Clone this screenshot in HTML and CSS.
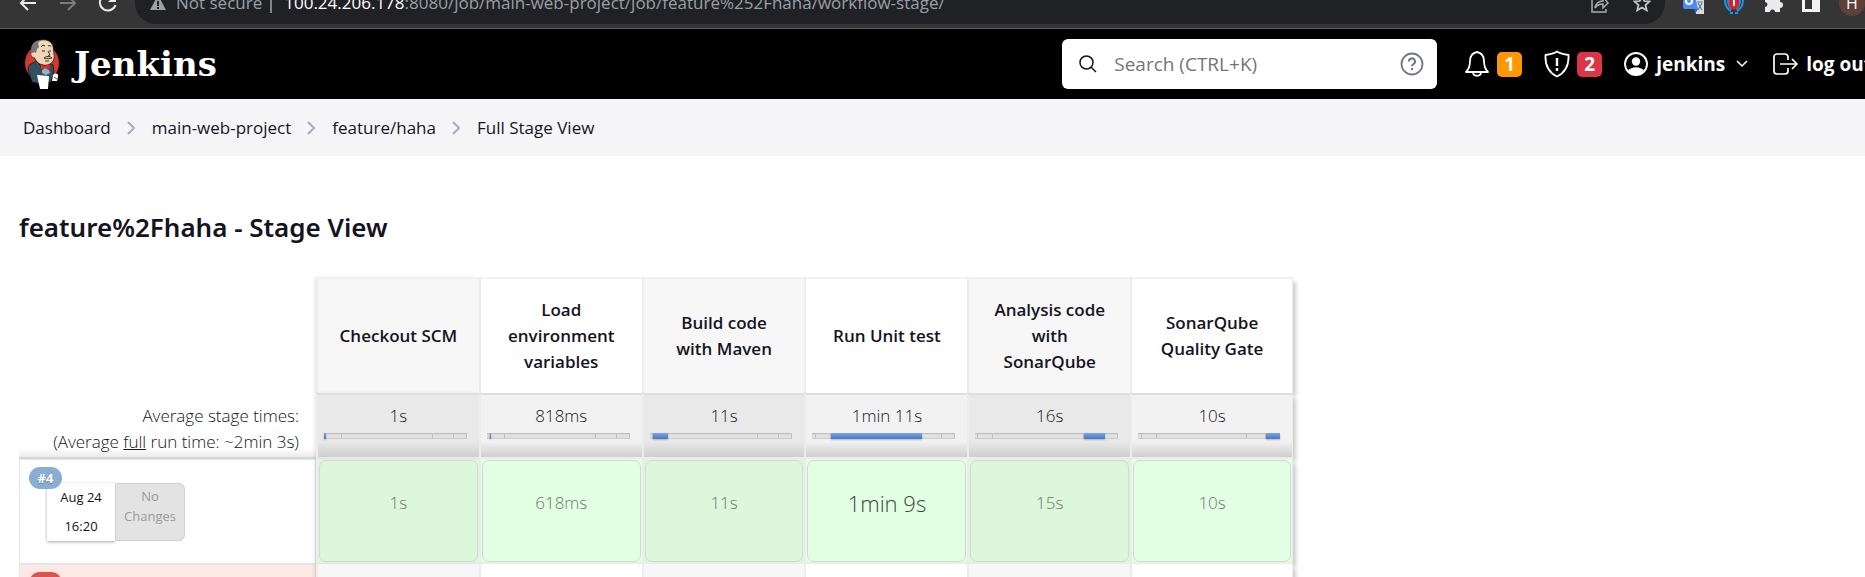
FILE: index.html
```html
<!DOCTYPE html>
<html lang="en">
<head>
<meta charset="utf-8">
<title>feature%2Fhaha - Stage View [Jenkins]</title>
<link rel="stylesheet" href="styles.css">
</head>
<body>
<div class="browser">
  <nav class="browser-nav" aria-label="Browser">
    <button class="icon-btn" aria-label="Back"><svg width="20" height="20" viewBox="0 0 20 20" fill="none" stroke="#e8eaed" stroke-width="2"><path d="M18 10H3M10 3l-7 7 7 7"/></svg></button>
    <button class="icon-btn" aria-label="Forward"><svg width="20" height="20" viewBox="0 0 20 20" fill="none" stroke="#7b7b7b" stroke-width="2"><path d="M2 10h15M10 3l7 7-7 7"/></svg></button>
    <button class="icon-btn" aria-label="Reload"><svg width="20" height="20" viewBox="0 0 20 20" fill="none" stroke="#e8eaed" stroke-width="2"><path d="M16.500 5A8 8 0 1 0 17.500 12"/><path d="M18 1v8h-8z" fill="#e8eaed" stroke="none"/></svg></button>
  </nav>
  <div class="omnibox">
    <svg width="16" height="16" viewBox="0 0 16 16"><path d="M8 0l8 15H0z" fill="#9aa0a6"/><path d="M8 6v5M8 12v2" stroke="#202124" stroke-width="2"/></svg>
    <span class="secure">Not secure</span>
    <span class="divider"></span>
    <span class="url"><b>100.24.206.178</b>:8080/job/main-web-project/job/feature%252Fhaha/workflow-stage/</span>
    <button class="icon-btn share" aria-label="Share"><svg width="18" height="20" viewBox="0 0 18 20" fill="none" stroke="#a9abae" stroke-width="1.500"><path d="M4 5H1v14h14v-3M4 15c1-5 4-7 8-7V4l5 6-5 5v-4c-4 0-6 1-8 4z"/></svg></button>
    <button class="icon-btn star" aria-label="Bookmark"><svg width="18" height="18" viewBox="0 0 18 18" fill="none" stroke="#c4c6c9" stroke-width="1.800"><path d="M9 2l2.200 4.900 5.300.5-4 3.600 1.200 5.300L9 13.500l-4.700 2.800L5.500 11l-4-3.600 5.300-.5z"/></svg></button>
  </div>
  <div class="extensions">
    <button class="icon-btn" aria-label="Translate"><svg width="22" height="22" viewBox="0 0 22 22"><path d="M10 5h11v17h-8z" fill="#dadce0"/><path d="M0 0h11l4 17H2a2 2 0 0 1-2-2z" fill="#4b8bf4"/><path d="M11 17h4l-3 5z" fill="#3158c8"/><circle cx="6" cy="9" r="3" fill="none" stroke="#fff" stroke-width="2"/><path d="M14 10h6M15 18l4-7M15 11l4 7" stroke="#607d8b" stroke-width="1.200"/></svg></button>
    <button class="icon-btn" aria-label="Proxy"><svg width="20" height="22" viewBox="0 0 20 22"><path d="M1 8c0 6 2 9 6 11M4 8c0 5 1 7 4 9M19 8c0 6-2 9-6 11M16 8c0 5-1 7-4 9M6 21h3M11 21h3" fill="none" stroke="#1595e8" stroke-width="2"/><path d="M5 6h10v7c0 2-3 4-5 5-2-1-5-3-5-5z" fill="#e31b23"/><path d="M10 7v7" stroke="#fff" stroke-width="2"/></svg></button>
    <button class="icon-btn" aria-label="Extensions"><svg width="20" height="20" viewBox="0 0 20 20" fill="#e8eaed"><path d="M2 4h5a3 3 0 0 1 6 0h4v5a3 3 0 0 1 0 6v4h-5a2.500 2.500 0 0 0-5 0H2v-5a2.500 2.500 0 0 0 0-5z"/></svg></button>
    <button class="icon-btn" aria-label="Side panel"><svg width="18" height="18" viewBox="0 0 18 18"><path d="M0 0h18v18H0z" fill="#f1f3f4"/><path d="M3 3h7v12H3z" fill="#353535"/></svg></button>
    <button class="avatar" aria-label="Profile">H</button>
  </div>
</div>

<header class="page-header">
  <a class="brand" href="#">
    <svg width="36" height="50" viewBox="0 0 36 50">
      <ellipse cx="18" cy="24" rx="17" ry="18" fill="#d33833"/>
      <path d="M7 25c-3 1-3 5-2 9l3 9 9 2 10-2 3-10-1-7-6-3-6 4-5-5z" fill="#335061" stroke="#111" stroke-width=".8"/>
      <path d="M11 4C15 0 24-1 28 5c2 3 1 6 2 10 1 5-1 9-6 11-6 1-10-1-13-6L8 15c-1-4 0-8 3-11z" fill="#f0d6b7" stroke="#222" stroke-width=".8"/>
      <path d="M17 1C11 1 7 5 7 11l1 5 2-3 2 1 1-4 2-2-1-4z" fill="#777"/>
      <path d="M9 13c-4 0-2 6 2 6" fill="#f0d6b7" stroke="#333" stroke-width=".7"/>
      <path d="M17 8c1-2 3-2 4-1M24 7c2-1 3 0 3 1M18 12h3M25 12h2M24 12l2 4-2 1M20 19c2-2 6-2 8 0-2 1-5 1-8 0M21 22h4" fill="none" stroke="#333" stroke-width="1"/>
      <path d="M17 25l4 2 5-2v6l-5-2-5 2z" fill="#d33833" stroke="#811" stroke-width=".6"/>
      <path d="M18 31l3-2 4 2 1 3-4 2-4-2z" fill="#8fb3c9"/>
      <path d="M13 36l12 1-1 13h-8z" fill="#fff"/>
      <path d="M29 36c3-3 6-1 5 2l-1 4h-5z" fill="#fff"/><path d="M30 38l3 2" stroke="#555"/>
    </svg>
    <span class="brand-name">Jenkins</span>
  </a>
  <div class="search">
    <svg width="18" height="18" viewBox="0 0 18 18" fill="none" stroke="#14141f" stroke-width="1.500"><circle cx="7.500" cy="7.500" r="6.500"/><path d="M12 12l5 5"/></svg>
    <input type="search" aria-label="Search" placeholder="Search (CTRL+K)">
    <a href="#" aria-label="Search help"><svg width="24" height="24" viewBox="0 0 24 24" fill="none" stroke="#73738c" stroke-width="1.800"><circle cx="12" cy="12" r="10.500"/><path d="M9 9.500a3 3 0 1 1 4.500 2.500c-1 .6-1.500 1-1.500 2.200" stroke-width="2"/><path d="M12 16v2" stroke-width="2.200"/></svg></a>
  </div>
  <nav class="account" aria-label="Account">
    <button class="alert bell">
      <svg width="24" height="28" viewBox="0 0 24 28" fill="none" stroke="#fff" stroke-width="1.800" stroke-linejoin="round"><path d="M12 2C7 3 5 7 5 11c0 5-1 8-4 11h22c-3-3-4-6-4-11 0-4-2-8-7-9zM8 22c0 5 8 5 8 0"/></svg>
      <span class="count warn">1</span>
    </button>
    <button class="alert">
      <svg width="26" height="28" viewBox="0 0 26 28" fill="none" stroke="#fff" stroke-width="1.800" stroke-linejoin="round"><path d="M13 1.500c-3 2-7 3-11.500 3.500C1 14 4 22 13 26.500 22 22 25 14 24.500 5 20 4.500 16 3.500 13 1.500z"/><path d="M13 8v8M13 18v3" stroke-width="2.400"/></svg>
      <span class="count danger">2</span>
    </button>
    <a class="user" href="#">
      <svg width="24" height="24" viewBox="0 0 24 24"><circle cx="12" cy="12" r="11" fill="none" stroke="#fff" stroke-width="1.900"/><circle cx="12" cy="9.500" r="4.200" fill="#fff"/><path d="M4 19c3-5 13-5 16 0-4 5-12 5-16 0z" fill="#fff"/></svg>
      jenkins
    </a>
    <button class="icon-btn caret" aria-label="User menu"><svg width="12" height="8" viewBox="0 0 12 8" fill="none" stroke="#fff" stroke-width="1.500"><path d="M1 1l5 5 5-5"/></svg></button>
    <a class="user" href="#">
      <svg width="25" height="22" viewBox="0 0 25 22" fill="none" stroke="#fff" stroke-width="1.700" stroke-linejoin="round"><path d="M15 7V4a3 3 0 0 0-3-3H4a3 3 0 0 0-3 3v14a3 3 0 0 0 3 3h8a3 3 0 0 0 3-3v-3M7 11h17M19 6l5 5-5 5"/></svg>
      log out
    </a>
  </nav>
</header>

<nav aria-label="Breadcrumb">
  <ol class="crumbs">
    <li><a href="#">Dashboard</a></li>
    <li><svg width="9" height="14" viewBox="0 0 9 14" fill="none" stroke="#a9a9c0" stroke-width="2"><path d="M1 1l6 6-6 6"/></svg><a href="#">main-web-project</a></li>
    <li><svg width="9" height="14" viewBox="0 0 9 14" fill="none" stroke="#a9a9c0" stroke-width="2"><path d="M1 1l6 6-6 6"/></svg><a href="#">feature/haha</a></li>
    <li><svg width="9" height="14" viewBox="0 0 9 14" fill="none" stroke="#a9a9c0" stroke-width="2"><path d="M1 1l6 6-6 6"/></svg><a href="#">Full Stage View</a></li>
  </ol>
</nav>

<main class="content">
  <h1>feature%2Fhaha - Stage View</h1>
  <table class="stages">
    <colgroup><col class="col-run"><col><col><col><col><col><col></colgroup>
    <thead>
      <tr class="names">
        <td></td>
        <th scope="col">Checkout SCM</th>
        <th scope="col">Load environment variables</th>
        <th scope="col">Build code with Maven</th>
        <th scope="col">Run Unit test</th>
        <th scope="col">Analysis code with SonarQube</th>
        <th scope="col">SonarQube Quality Gate</th>
      </tr>
    </thead>
    <tbody>
      <tr class="averages">
        <th scope="row">Average stage times:<br>(Average <u>full</u> run time: ~2min 3s)</th>
        <td>1s<div class="track"><i class="on" style="width:1.400%"></i><i style="width:11.200%"></i><i style="width:63.600%"></i><i style="width:14.700%"></i><i></i></div></td>
        <td>818ms<div class="track"><i style="width:2%"></i><i class="on" style="width:1%"></i><i style="width:10%"></i><i style="width:63.600%"></i><i style="width:14.400%"></i><i></i></div></td>
        <td>11s<div class="track"><i style="width:2%"></i><i class="on" style="width:10.600%"></i><i style="width:63.600%"></i><i style="width:14.700%"></i><i></i></div></td>
        <td>1min 11s<div class="track"><i style="width:2.600%"></i><i style="width:10.500%"></i><i class="on" style="width:63.600%"></i><i style="width:14.300%"></i><i></i></div></td>
        <td>16s<div class="track"><i style="width:2.200%"></i><i style="width:10.400%"></i><i style="width:63.600%"></i><i class="on" style="width:14.700%"></i><i></i></div></td>
        <td>10s<div class="track"><i style="width:2.800%"></i><i style="width:10.400%"></i><i style="width:63.200%"></i><i style="width:13.600%"></i><i class="on"></i></div></td>
      </tr>
      <tr class="run">
        <th scope="row">
          <div class="run-info">
            <span class="build">#4</span>
            <div class="card">
              <div class="when"><time>Aug 24</time><time>16:20</time></div>
              <div class="changes">No<br>Changes</div>
            </div>
          </div>
        </th>
        <td><div class="result">1s</div></td>
        <td><div class="result">618ms</div></td>
        <td><div class="result">11s</div></td>
        <td><div class="result slow">1min 9s</div></td>
        <td><div class="result">15s</div></td>
        <td><div class="result">10s</div></td>
      </tr>
      <tr class="run failed">
        <th scope="row">
          <div class="run-info"><span class="build">#3</span></div>
        </th>
        <td></td><td></td><td></td><td></td><td></td><td></td>
      </tr>
    </tbody>
  </table>
</main>
</body>
</html>
```
FILE: styles.css
```css
* { box-sizing: border-box; }

html { overflow: hidden; }

body {
  margin: 0;
  background: #fff;
  color: #14141f;
  font: 17px/26px "Open Sans", "Noto Sans", sans-serif;
}

a { color: inherit; text-decoration: none; }

button {
  margin: 0;
  padding: 0;
  border: 0;
  background: none;
  color: inherit;
  font: inherit;
}

svg { display: block; flex: none; }

/* Browser toolbar, scrolled partly under the top edge */
.browser {
  display: flex;
  align-items: flex-end;
  height: 29px;
  padding-bottom: 4px;
  overflow: hidden;
  background: #353535;
  border-bottom: 1px solid #5c5c5c;
}

.browser-nav {
  display: flex;
  align-items: center;
  gap: 20px;
  height: 42px;
  padding: 0 17px 0 18px;
}

.omnibox {
  display: flex;
  flex: 1;
  align-items: center;
  height: 42px;
  padding: 0 14px 0 15px;
  border-radius: 21px;
  background: #202124;
  color: #9aa0a6;
  white-space: nowrap;
}

.secure { margin-left: 10px; }
.divider { width: 2px; height: 20px; margin: 0 12px 0 8px; background: #80868b; }
.url b { color: #fff; font-weight: 400; }
.share { margin-left: auto; }
.star { margin-left: 24px; }

.extensions {
  display: flex;
  align-items: center;
  gap: 19px;
  height: 42px;
  padding-left: 18px;
}

.avatar {
  width: 26px;
  height: 26px;
  border-radius: 50%;
  background: #5d4037;
  color: #fff;
  font-size: 16px;
}

/* Jenkins header */
.page-header {
  display: flex;
  align-items: center;
  height: 70px;
  margin-right: -23px;
  padding: 0 16px 0 24px;
  background: #000;
  color: #fff;
}

.brand { display: flex; align-items: center; gap: 14px; }
.brand-name { font: bold 34px/40px "DejaVu Serif", serif; }

.search {
  display: flex;
  align-items: center;
  width: 375px;
  height: 50px;
  margin-left: auto;
  padding: 0 13px 0 17px;
  border-radius: 6px;
  background: #fff;
}

.search input {
  flex: 1;
  min-width: 0;
  margin: 0 16px 0 17px;
  padding: 0;
  border: 0;
  outline: 0;
  background: none;
  font: 19px/26px "Open Sans", sans-serif;
}

.search input::placeholder { color: #757575; }

.account {
  display: flex;
  align-items: center;
  margin-left: 28px;
  font-size: 19px;
  font-weight: 700;
  white-space: nowrap;
}

.alert { display: flex; align-items: center; gap: 7px; margin-right: 22px; }
.bell { gap: 8px; }

.count {
  width: 25px;
  border-radius: 5px;
  line-height: 25px;
  text-align: center;
}

.warn { background: #ff9800; }
.danger { background: #dc3545; }
.user { display: flex; align-items: center; gap: 8px; }
.caret { margin: 0 25px 0 11px; }

/* Breadcrumbs */
.crumbs {
  display: flex;
  align-items: center;
  gap: 16px;
  height: 57px;
  margin: 0;
  padding: 0 23px;
  background: #f5f5f8;
  list-style: none;
}

.crumbs li { display: flex; align-items: center; gap: 16px; }

.content { padding: 51px 19px 0; }

h1 {
  margin: 0 0 30px;
  font-family: "Noto Sans", "Open Sans", sans-serif;
  font-size: 26px;
  font-weight: 600;
  line-height: 40px;
}

/* Stage table */
.stages {
  width: 1274px;
  border-spacing: 0;
  table-layout: fixed;
  font-weight: 300;
  text-align: center;
}

.col-run { width: 297px; }
.stages th, .stages td { padding: 0; }

.stages td:not(:first-child),
.names th {
  border-left: 2px solid #ececec;
}

.stages tr > :nth-child(2) { box-shadow: -2px 0 3px rgba(0, 0, 0, .08); }
.stages tr > :last-child { border-right: 1px solid #ececec; box-shadow: 4px 4px 4px -1px rgba(0, 0, 0, .2); }
.stages tr > :nth-child(even) { background-color: #f7f7f7; }
.stages tr > :nth-child(odd) { background-color: #fff; }

.names > th {
  height: 116px;
  padding: 0 19px;
  border-top: 2px solid #f1f1f1;
  font-weight: 600;
}

.averages > th {
  padding: 0 17px 2px 0;
  background: linear-gradient(#fff 85%, #ececec);
  border-bottom: 2px solid #d6d6d6;
  font-weight: 300;
  text-align: right;
  vertical-align: bottom;
}

.averages > td {
  height: 66px;
  padding-top: 8px;
  border-top: 2px solid #dedede;
  border-bottom: 2px solid #ececec;
  vertical-align: top;
}

.averages > td:nth-child(even) { background: linear-gradient(#e9e9e9 75%, #cecece); }
.averages > td:nth-child(odd) { background: linear-gradient(#f2f2f2 75%, #cecece); }

.track {
  display: flex;
  height: 6px;
  margin: 4px 12px 0 6px;
  background: #e1e1e1;
  box-shadow: inset 0 1px 1px #b9b9b9, inset 0 -1px 0 #cacaca;
}

.track i { border-right: 1px solid #c2c2c2; }
.track i:last-child { flex: 1; }
.track .on { border: 0; background: linear-gradient(#7ba5dc, #4478cb); box-shadow: 0 1px 2px rgba(0, 0, 0, .25); }

.run > * { height: 105px; }

.run th {
  border: 1px solid #e4e4e4;
  font-weight: 400;
  text-align: left;
  vertical-align: top;
}

.run td { border-bottom: 2px solid #ececec; }
.run:not(.failed) td:nth-child(even) { background: #ddf7dc; }
.run:not(.failed) td:nth-child(odd) { background: #e3ffe3; }

.result {
  display: flex;
  align-items: center;
  justify-content: center;
  height: 102px;
  margin: 1px 1px 0;
  padding-bottom: 16px;
  border: 1px solid #d2d9d2;
  border-radius: 7px;
  color: #6c776c;
}

.slow { color: #3b453b; font-size: 22px; }

.run-info { padding: 7px 9px; }

.build {
  position: relative;
  display: block;
  width: 33px;
  border-radius: 11px;
  background: #8aadd4;
  color: #fff;
  font-size: 13px;
  font-weight: 700;
  line-height: 22px;
  text-align: center;
  text-shadow: 0 1px 1px rgba(0, 0, 0, .3);
}

.card {
  display: flex;
  width: 138px;
  height: 58px;
  margin: -6px 0 0 18px;
  font-size: 13px;
  text-align: center;
}

.when {
  display: flex;
  flex: 1;
  flex-direction: column;
  justify-content: space-between;
  box-shadow: 0 1px 3px rgba(0, 0, 0, .35);
  line-height: 29px;
}

.changes {
  flex: 1;
  padding-top: 2px;
  border: 1px solid #d0d0d0;
  border-radius: 0 6px 6px 0;
  background: #e3e3e3;
  color: #999;
  line-height: 20px;
}

.failed > th:first-child { background: #ffe8e4; }
.failed .build { background: #d9534f; }
```
